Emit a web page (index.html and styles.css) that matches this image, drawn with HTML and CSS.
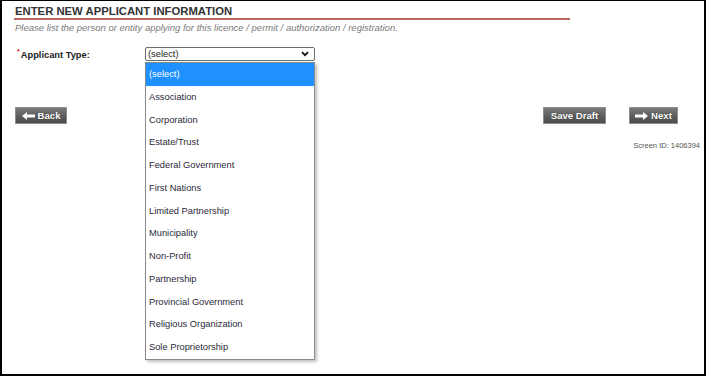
FILE: index.html
```html
<!DOCTYPE html>
<html lang="en">
<head>
    <meta charset="UTF-8">
    <title>Enter New Applicant Information</title>
    <link rel="stylesheet" href="styles.css">
</head>
<body>
    <div class="frame">
        <!-- Page Heading -->
        <h1 class="page-title">ENTER NEW APPLICANT INFORMATION</h1>
        <p class="page-note">Please list the person or entity applying for this licence / permit / authorization / registration.</p>

        <!-- Applicant Type -->
        <div class="form-row">
            <label class="field-label" for="applicantType"><span class="required">*</span>Applicant Type:</label>
            <div class="select-wrap">
                <div class="select-box" id="applicantType">
                    <span>(select)</span>
                    <svg class="chevron" width="8" height="6" viewBox="0 0 8 6">
                        <path d="M1 1.2 L4 4.2 L7 1.2" fill="none" stroke="#111" stroke-width="1.8"/>
                    </svg>
                </div>
                <ul class="select-list">
                    <li class="selected">(select)</li>
                    <li>Association</li>
                    <li>Corporation</li>
                    <li>Estate/Trust</li>
                    <li>Federal Government</li>
                    <li>First Nations</li>
                    <li>Limited Partnership</li>
                    <li>Municipality</li>
                    <li>Non-Profit</li>
                    <li>Partnership</li>
                    <li>Provincial Government</li>
                    <li>Religious Organization</li>
                    <li>Sole Proprietorship</li>
                </ul>
            </div>
        </div>

        <!-- Buttons -->
        <div class="button-row">
            <a href="#" class="btn btn-back">
                <svg width="13" height="8" viewBox="0 0 13 8">
                    <path d="M0 4 L5 0 L5 2.6 L13 2.6 L13 5.4 L5 5.4 L5 8 Z" fill="#ffffff"/>
                </svg>
                Back
            </a>
            <div class="button-group">
                <a href="#" class="btn btn-save">Save Draft</a>
                <a href="#" class="btn btn-next">
                    <svg width="13" height="8" viewBox="0 0 13 8">
                        <path d="M13 4 L8 0 L8 2.6 L0 2.6 L0 5.4 L8 5.4 L8 8 Z" fill="#ffffff"/>
                    </svg>
                    Next
                </a>
            </div>
        </div>

        <p class="screen-id">Screen ID: 1406394</p>
    </div>
</body>
</html>
```

FILE: styles.css
```css
/* Global Styles */
body {
    margin: 0;
    font-family: 'Liberation Sans', Arial, sans-serif;
    background-color: #ffffff;
}

.frame {
    position: relative;
    width: 706px;
    height: 376px;
    box-sizing: border-box;
    border: 2px solid #000000;
    border-top-width: 1px;
    padding: 4px 4px 0 12px;
    overflow: hidden;
}

/* Heading */
.page-title {
    width: 555px;
    margin: 0;
    padding-left: 1px;
    font-size: 11.3px;
    line-height: 13px;
    font-weight: bold;
    color: #333333;
    border-bottom: 2px solid #b7675b;
}

.page-note {
    margin: 2px 0 0 1px;
    font-size: 9.5px;
    line-height: 11px;
    font-style: italic;
    color: #7a7a7a;
}

/* Applicant Type */
.form-row {
    display: flex;
    align-items: center;
    margin-top: 14px;
    height: 14px;
}

.field-label {
    width: 128px;
    padding-left: 3px;
    font-size: 9.3px;
    font-weight: bold;
    color: #222222;
}

.required {
    color: #d81e1e;
    font-size: 7px;
    vertical-align: 4px;
    margin-right: 1px;
}

.select-wrap {
    position: relative;
    width: 170px;
}

.select-box {
    display: flex;
    justify-content: space-between;
    align-items: center;
    height: 14px;
    box-sizing: border-box;
    padding: 0 5px 0 2px;
    border: 1px solid #6d6d6d;
    border-radius: 2px;
    font-size: 9.3px;
    color: #222222;
    background-color: #ffffff;
}

.select-list {
    position: absolute;
    top: 15px;
    left: 0;
    width: 170px;
    box-sizing: border-box;
    margin: 0;
    padding: 0;
    list-style: none;
    background-color: #ffffff;
    border: 1px solid #8a8a8a;
    box-shadow: 2px 2px 3px rgba(0, 0, 0, 0.25);
    z-index: 5;
}

.select-list li {
    height: 22.75px;
    line-height: 22.75px;
    padding-left: 3px;
    font-size: 9.3px;
    color: #2a2a3a;
}

.select-list li.selected {
    background-color: #1e90ff;
    color: #ffffff;
}

/* Buttons */
.button-row {
    display: flex;
    justify-content: space-between;
    margin-top: 46px;
    padding-left: 1px;
    padding-right: 22px;
}

.button-group {
    display: flex;
    gap: 23px;
}

.btn {
    display: inline-flex;
    align-items: center;
    justify-content: center;
    gap: 3px;
    height: 17px;
    box-sizing: border-box;
    border: 1px solid #8e8e8e;
    background: linear-gradient(#7c7c7c, #5b5b5b 55%, #4c4c4c);
    color: #ffffff;
    font-size: 9.6px;
    font-weight: bold;
    text-decoration: none;
    text-shadow: 0 0 1px rgba(0, 0, 0, 0.6);
}

.btn-back {
    width: 52px;
}

.btn-save {
    width: 63px;
}

.btn-next {
    width: 49px;
}

.screen-id {
    margin: 17px 0 0 0;
    text-align: right;
    font-size: 7.5px;
    color: #555555;
}
```
